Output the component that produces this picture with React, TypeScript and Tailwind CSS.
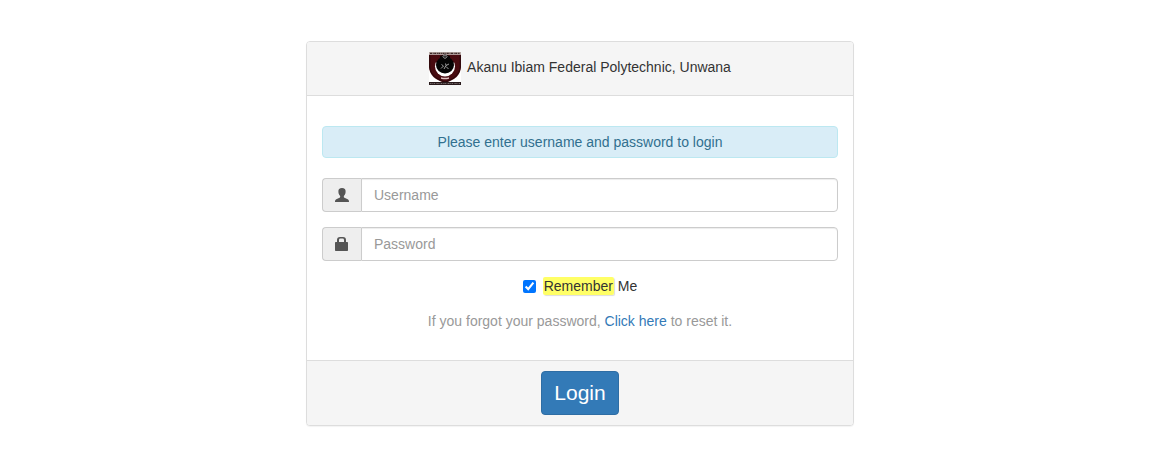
import { useState } from "react";

function Crest() {
  return (
    <svg viewBox="0 0 32 33" className="h-[33px] w-8 shrink-0" aria-hidden="true">
      <rect width="32" height="33" fill="#ffffff" />
      <path d="M0 2.5H32V15C31.5 23 26 28 16 31C6 28 .5 23 0 15Z" fill="#480b10" />
      <path d="M.8 3V15C1.5 22.5 7 27 16 30C25 27 30.5 22.5 31.2 15V3" fill="none" stroke="#28080b" strokeWidth="1" />
      <rect width="32" height="2.5" fill="#b7aaa5" />
      <path d="M1 1.3H31" stroke="#3c2828" strokeWidth="1.3" strokeDasharray="2 .7 1 .5" />
      <circle cx="16" cy="14.5" r="10" fill="#ffffff" />
      <path d="M6 3H26V9L24 11H8L6 9Z" fill="#480b10" />
      <ellipse cx="16" cy="13" rx="9" ry="8.5" fill="#050505" />
      <path d="M11 4L16 2.5L21 4V8H11Z" fill="#080506" />
      <path d="M13.5 4.5L16 6.5L18.5 4.5M14 3.8H18" fill="none" stroke="#b9b9b9" strokeWidth=".8" />
      <path d="M12 16.5L14.5 14L12.5 12.5M15 17L17 13.5L16.5 11.5M17 14.5L19.5 17M17 13.5L20 12" fill="none" stroke="#b0b0b0" strokeWidth=".9" />
      <path d="M12 25.3Q16 26.3 20 25.3V26.8Q16 27.8 12 26.8Z" fill="#dfc2c2" />
      <rect y="30" width="32" height="3" fill="#28191b" />
      <path d="M1 31.5H31" stroke="#8d8383" strokeWidth=".8" strokeDasharray="1.5 .8 .7 .6" />
    </svg>
  );
}

function UserIcon() {
  return (
    <svg viewBox="0 0 14 14" className="size-3.5" fill="#555555" aria-hidden="true">
      <path d="M7 0C9.5 0 10.8 1.4 10.6 3.6C10.6 5.7 10 6.8 9 7.8C8.6 8.7 8.8 9.4 9.5 9.8L12.7 11.2C13.7 11.7 14 12.2 14 14H0C0 12.2 .3 11.7 1.3 11.2L4.5 9.8C5.2 9.4 5.4 8.7 5 7.8C4 6.8 3.4 5.7 3.4 3.6C3.2 1.4 4.5 0 7 0Z" />
    </svg>
  );
}

function LockIcon() {
  return (
    <svg viewBox="0 0 14 14" className="size-3.5" fill="#555555" aria-hidden="true">
      <path fillRule="evenodd" d="M2 5V3Q2 0 5 0H8Q11 0 11 3V5H12.3Q13 5 13 5.7V13.3Q13 14 12.3 14H.7Q0 14 0 13.3V5.7Q0 5 .7 5ZM4 5H9V3Q9 1.6 7.6 1.6H5.4Q4 1.6 4 3Z" />
    </svg>
  );
}

interface FieldProps {
  id: string;
  type: string;
  label: string;
  icon: React.ReactNode;
}

function Field({ id, type, label, icon }: FieldProps) {
  return (
    <div className="flex h-[34px] w-full">
      <label
        htmlFor={id}
        aria-label={label}
        className="flex w-[39px] shrink-0 items-center justify-center rounded-l border border-r-0 border-[#cccccc] bg-[#eeeeee]"
      >
        {icon}
      </label>
      <input
        id={id}
        name={id}
        type={type}
        placeholder={label}
        className="min-w-0 flex-1 rounded-r border border-[#cccccc] bg-white px-3 text-[#555555] shadow-[inset_0_1px_1px_rgba(0,0,0,0.075)] outline-none placeholder:text-[#999999] focus:border-[#66afe9]"
      />
    </div>
  );
}

export default function App() {
  const [remember, setRemember] = useState(true);

  return (
    <main className="flex justify-center bg-white py-[41px] pr-4 pl-5 font-['Liberation_Sans',Arial,sans-serif] text-sm leading-5 text-[#333333]">
      <form
        onSubmit={(event) => event.preventDefault()}
        className="w-full max-w-[548px] overflow-hidden rounded border border-[#dddddd] bg-white shadow-[0_1px_1px_rgba(0,0,0,0.05)]"
      >
        <header className="flex items-center justify-center gap-1.5 border-b border-[#dddddd] bg-[#f5f5f5] px-4 py-2.5">
          <Crest />
          <h1 className="pb-1">Akanu Ibiam Federal Polytechnic, Unwana</h1>
        </header>

        <div className="flex flex-col items-center gap-[15px] px-[15px] pt-[30px] pb-[29px]">
          <p className="mb-[5px] w-full rounded border border-[#bce8f1] bg-[#d9edf7] py-[5px] text-center text-[#31708f]">
            Please enter username and password to login
          </p>
          <Field id="username" type="text" label="Username" icon={<UserIcon />} />
          <Field id="password" type="password" label="Password" icon={<LockIcon />} />
          <div className="flex items-center gap-[7px]">
            <input
              id="remember"
              type="checkbox"
              checked={remember}
              onChange={(event) => setRemember(event.target.checked)}
              className="size-[13px]"
            />
            <label htmlFor="remember">
              <span className="rounded-xs bg-[#ffff66] p-px shadow-[1px_1px_1px_#dddddd]">Remember</span> Me
            </label>
          </div>
          <p className="text-[#999999]">
            If you forgot your password,{" "}
            <a href="#reset" className="text-[#337ab7] hover:underline">Click here</a> to reset it.
          </p>
        </div>

        <footer className="flex justify-center border-t border-[#dddddd] bg-[#f5f5f5] px-4 py-2.5">
          <button
            type="submit"
            className="rounded border border-[#2e6da4] bg-[#337ab7] px-3 py-1.5 text-[21px] leading-[30px] text-white hover:bg-[#286090]"
          >
            Login
          </button>
        </footer>
      </form>
    </main>
  );
}
